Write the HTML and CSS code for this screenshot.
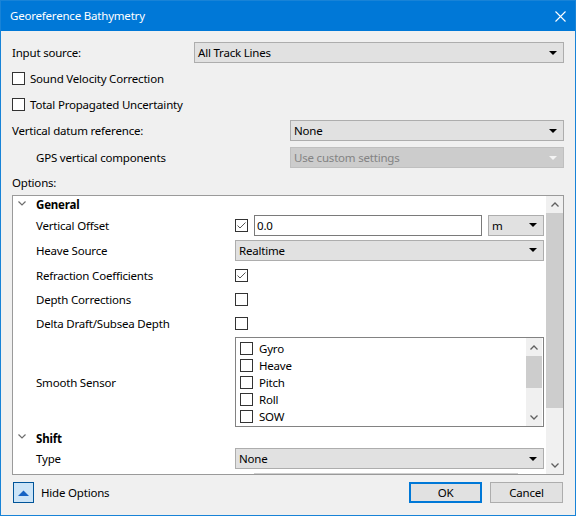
FILE: index.html
```html
<!DOCTYPE html>
<html lang="en">
<head>
  <meta charset="UTF-8">
  <title>Georeference Bathymetry</title>
  <link rel="stylesheet" href="styles.css">
</head>
<body>
<div class="window">
  <div class="titlebar">
    <span class="title">Georeference Bathymetry</span>
    <svg class="close" width="11" height="11" viewBox="0 0 11 11">
      <path d="M0.5 0.5 L10.5 10.5 M10.5 0.5 L0.5 10.5" stroke="#fff" stroke-width="1.1" fill="none"/>
    </svg>
  </div>

  <div class="content">
    <div class="row input-row">
      <span class="label input-label">Input source:</span>
      <div class="combo grow">All Track Lines</div>
    </div>
    <div class="row check-row first">
      <span class="cb"></span><span class="cb-text">Sound Velocity Correction</span>
    </div>
    <div class="row check-row second">
      <span class="cb"></span><span class="cb-text">Total Propagated Uncertainty</span>
    </div>
    <div class="row datum-row">
      <span class="label datum-label">Vertical datum reference:</span>
      <div class="combo grow">None</div>
    </div>
    <div class="row gps-row">
      <span class="label gps-label">GPS vertical components</span>
      <div class="combo grow disabled">Use custom settings</div>
    </div>
    <div class="row options-row">Options:</div>

    <div class="grid">
      <div class="grid-body">
        <div class="prow head h17">
          <svg class="chev" width="8" height="5" viewBox="0 0 8 5"><path d="M0.5 0.5 L4 4 L7.5 0.5" stroke="#6d6d6d" stroke-width="1.2" fill="none"/></svg>
          <span>General</span>
        </div>
        <div class="prow h24">
          <span class="plabel">Vertical Offset</span>
          <div class="pctrl">
            <span class="cb checked"><svg width="11" height="11" viewBox="0 0 11 11"><path d="M1.5 5.5 L4 8 L9.5 2.5" stroke="#555" stroke-width="1" fill="none"/></svg></span>
            <div class="textbox">0.0</div>
            <div class="combo unit">m</div>
          </div>
        </div>
        <div class="prow h26">
          <span class="plabel">Heave Source</span>
          <div class="pctrl"><div class="combo grow">Realtime</div></div>
        </div>
        <div class="prow h24">
          <span class="plabel">Refraction Coefficients</span>
          <div class="pctrl">
            <span class="cb checked"><svg width="11" height="11" viewBox="0 0 11 11"><path d="M1.5 5.5 L4 8 L9.5 2.5" stroke="#555" stroke-width="1" fill="none"/></svg></span>
          </div>
        </div>
        <div class="prow h24">
          <span class="plabel">Depth Corrections</span>
          <div class="pctrl"><span class="cb"></span></div>
        </div>
        <div class="prow h24">
          <span class="plabel">Delta Draft/Subsea Depth</span>
          <div class="pctrl"><span class="cb"></span></div>
        </div>
        <div class="prow h94">
          <span class="plabel">Smooth Sensor</span>
          <div class="pctrl">
            <div class="listbox">
              <div class="items">
                <div class="item"><span class="cb"></span>Gyro</div>
                <div class="item"><span class="cb"></span>Heave</div>
                <div class="item"><span class="cb"></span>Pitch</div>
                <div class="item"><span class="cb"></span>Roll</div>
                <div class="item"><span class="cb"></span>SOW</div>
              </div>
              <div class="vscroll small">
                <div class="arrow"><svg width="8" height="5" viewBox="0 0 8 5"><path d="M0.5 4.5 L4 1 L7.5 4.5" stroke="#606060" stroke-width="1.3" fill="none"/></svg></div>
                <div class="thumb"></div>
                <div class="track"></div>
                <div class="arrow"><svg width="8" height="5" viewBox="0 0 8 5"><path d="M0.5 0.5 L4 4 L7.5 0.5" stroke="#606060" stroke-width="1.3" fill="none"/></svg></div>
              </div>
            </div>
          </div>
        </div>
        <div class="prow head h18">
          <svg class="chev" width="8" height="5" viewBox="0 0 8 5"><path d="M0.5 0.5 L4 4 L7.5 0.5" stroke="#6d6d6d" stroke-width="1.2" fill="none"/></svg>
          <span>Shift</span>
        </div>
        <div class="prow h23">
          <span class="plabel">Type</span>
          <div class="pctrl"><div class="combo grow">None</div></div>
        </div>
        <div class="prow cut">
          <div class="pctrl"><div class="cut-edge"></div></div>
        </div>
      </div>
      <div class="vscroll main">
        <div class="arrow"><svg width="8" height="5" viewBox="0 0 8 5"><path d="M0.5 4.5 L4 1 L7.5 4.5" stroke="#606060" stroke-width="1.3" fill="none"/></svg></div>
        <div class="thumb"></div>
        <div class="track"></div>
        <div class="arrow"><svg width="8" height="5" viewBox="0 0 8 5"><path d="M0.5 0.5 L4 4 L7.5 0.5" stroke="#606060" stroke-width="1.3" fill="none"/></svg></div>
      </div>
    </div>

    <div class="bottom">
      <div class="hide-btn">
        <svg width="11" height="6" viewBox="0 0 11 6"><path d="M0 6 L5.5 0.5 L11 6 Z" fill="#1563c4"/></svg>
      </div>
      <span class="hide-text">Hide Options</span>
      <div class="spacer"></div>
      <div class="btn default">OK</div>
      <div class="btn">Cancel</div>
    </div>
  </div>
</div>
</body>
</html>
```

FILE: styles.css
```css
* {
  box-sizing: border-box;
}
body {
  margin: 0;
  font-family: 'Noto Sans', sans-serif;
  font-size: 11.5px;
  letter-spacing: -0.2px;
  color: #000;
}
.window {
  width: 576px;
  height: 516px;
  border: 1px solid #1883d7;
  background: #f0f0f0;
  display: flex;
  flex-direction: column;
}
.titlebar {
  height: 30px;
  flex-shrink: 0;
  background: #0078d7;
  color: #fff;
  display: flex;
  align-items: center;
  justify-content: space-between;
  padding: 0 9px 0 9px;
}
.title {
  line-height: 30px;
}
.content {
  padding: 0 11px;
  display: flex;
  flex-direction: column;
}
.row {
  display: flex;
  align-items: center;
}
.input-row {
  margin-top: 11px;
  height: 21px;
}
.input-label {
  width: 182px;
}
.check-row.first {
  margin-top: 3px;
  height: 25px;
}
.check-row.second {
  height: 26px;
}
.cb-text {
  margin-left: 5px;
}
.datum-row {
  margin-top: 3px;
  height: 21px;
}
.datum-label {
  width: 278px;
}
.gps-row {
  margin-top: 6px;
  height: 21px;
}
.gps-label {
  width: 254px;
  margin-left: 24px;
}
.options-row {
  margin-top: 4px;
  height: 20px;
}
.grow {
  flex: 1;
}

/* controls */
.combo {
  height: 21px;
  background: #e1e1e1;
  border: 1px solid #adadad;
  display: flex;
  align-items: center;
  justify-content: space-between;
  padding: 0 6px 0 3px;
}
.combo::after {
  content: '';
  border-left: 4px solid transparent;
  border-right: 4px solid transparent;
  border-top: 4px solid #000;
}
.combo.disabled {
  background: #cccccc;
  border-color: #bfbfbf;
  color: #838383;
}
.combo.disabled::after {
  border-top-color: #f4f4f4;
}
.cb {
  width: 13px;
  height: 13px;
  flex-shrink: 0;
  border: 1px solid #333;
  background: #fff;
  display: flex;
}
.textbox {
  width: 228px;
  height: 21px;
  margin-left: 6px;
  border: 1px solid #7a7a7a;
  background: #fff;
  padding-left: 2px;
  display: flex;
  align-items: center;
}
.combo.unit {
  width: 56px;
  margin-left: 6px;
}

/* property grid */
.grid {
  margin-top: 3px;
  height: 280px;
  border: 1px solid #9a9a9a;
  background: #fff;
  display: flex;
}
.grid-body {
  flex: 1;
  overflow: hidden;
  padding-right: 2px;
}
.prow {
  display: flex;
  align-items: center;
  padding-left: 23px;
}
.prow.head {
  font-weight: bold;
  position: relative;
}
.chev {
  position: absolute;
  left: 5px;
  top: 5px;
}
.h17 { height: 17px; }
.h18 { height: 18px; }
.h23 { height: 23px; }
.h24 { height: 24px; }
.h26 { height: 26px; }
.h94 { height: 94px; }
.plabel {
  width: 199px;
  flex-shrink: 0;
}
.pctrl {
  flex: 1;
  display: flex;
  align-items: center;
}
.prow.cut {
  height: 10px;
  align-items: flex-start;
  padding-top: 3px;
  padding-left: 222px;
}
.cut-edge {
  margin-left: 19px;
  width: 264px;
  border-top: 1px solid #cfcfcf;
}

/* list box */
.listbox {
  flex: 1;
  height: 90px;
  border: 1px solid #828282;
  display: flex;
}
.items {
  flex: 1;
  padding: 2px 0 0 4px;
}
.item {
  height: 17px;
  display: flex;
  align-items: center;
  gap: 6px;
}

/* scrollbars */
.vscroll {
  display: flex;
  flex-direction: column;
  background: #f0f0f0;
}
.vscroll .arrow {
  height: 17px;
  display: flex;
  align-items: center;
  justify-content: center;
}
.vscroll .thumb {
  background: #cdcdcd;
}
.vscroll .track {
  flex: 1;
}
.vscroll.main {
  width: 17px;
}
.vscroll.main .thumb {
  height: 195px;
}
.vscroll.small {
  width: 16px;
  margin-right: 1px;
}
.vscroll.small .arrow {
  height: 18px;
}
.vscroll.small .thumb {
  height: 32px;
}

/* bottom bar */
.bottom {
  margin-top: 7px;
  height: 21px;
  display: flex;
  align-items: center;
}
.hide-btn {
  width: 21px;
  height: 21px;
  margin-left: 1px;
  background: #cce4f7;
  border: 1px solid #005499;
  display: flex;
  align-items: center;
  justify-content: center;
}
.hide-text {
  margin-left: 7px;
}
.spacer {
  flex: 1;
}
.btn {
  width: 73px;
  height: 21px;
  background: #e1e1e1;
  border: 1px solid #adadad;
  display: flex;
  align-items: center;
  justify-content: center;
  margin-left: 8px;
}
.btn:last-child {
  margin-right: 1px;
}
.btn.default {
  border: 2px solid #0078d7;
}
```
